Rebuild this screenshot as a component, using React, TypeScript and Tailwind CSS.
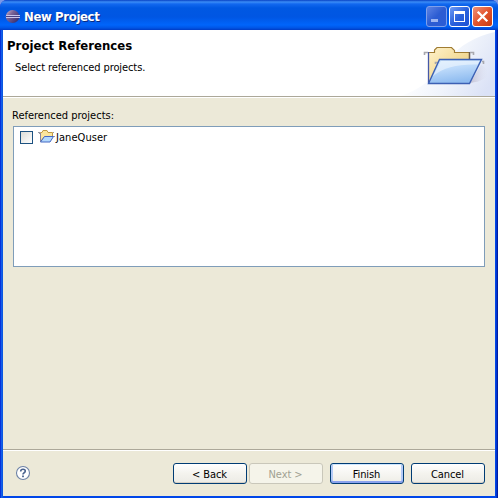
import type { ReactNode } from "react";

function EclipseLogo() {
  return (
    <svg width="16" height="16" viewBox="0 0 16 16" className="shrink-0">
      <defs>
        <linearGradient id="logo" x1="0" y1="0" x2="1" y2="0.8">
          <stop offset="0" stopColor="#d9bcc9" />
          <stop offset="0.4" stopColor="#7a6397" />
          <stop offset="1" stopColor="#322a6c" />
        </linearGradient>
      </defs>
      <ellipse cx="7.6" cy="7.5" rx="6.800" ry="6.500" fill="url(#logo)" />
      <path d="M1 6.500h14M1 8.500h14" stroke="#c9c6ec" strokeWidth="1" />
      <path d="M1 7.500h13" stroke="#4b4083" />
    </svg>
  );
}

function CaptionButton({ kind }: { kind: "min" | "max" | "close" }) {
  const tone =
    kind === "close"
      ? "border-white bg-linear-to-br from-[#ee9177] via-[#e2532c] to-[#c63b10]"
      : kind === "max"
        ? "border-white bg-linear-to-br from-[#6f9bf5] via-[#2b62dc] to-[#1c50d4]"
        : "border-[#7f9fea] bg-linear-to-br from-[#5d83e4] via-[#2c5cd2] to-[#2b5cd6]";
  return (
    <div className={`h-[21px] w-[21px] rounded-[3px] border ${tone}`}>
      <svg width="19" height="19" viewBox="0 0 19 19" className="block">
        {kind === "min" && <rect x="4" y="12" width="7" height="3" fill="#9db5f0" />}
        {kind === "max" && (
          <path d="M4 4h11v11H4zM5 7v7h9V7z" fill="#fff" fillRule="evenodd" />
        )}
        {kind === "close" && (
          <path d="M4.7 4.7l9.6 9.6M14.3 4.7l-9.6 9.6" stroke="#fff" strokeWidth="2.3" />
        )}
      </svg>
    </div>
  );
}

function BannerFolder() {
  return (
    <svg width="95" height="66" viewBox="0 0 95 66" className="shrink-0">
      <defs>
        <linearGradient id="sweep" x1="0" y1="0.3" x2="1" y2="0.7">
          <stop offset="0.2" stopColor="#ffffff" />
          <stop offset="0.6" stopColor="#eff3fb" />
          <stop offset="1" stopColor="#dbe2f6" />
        </linearGradient>
        <linearGradient id="paper" x1="0" y1="0" x2="1" y2="1">
          <stop offset="0" stopColor="#fff3cc" />
          <stop offset="1" stopColor="#e9c66c" />
        </linearGradient>
        <linearGradient id="front" x1="0" y1="0" x2="0.3" y2="1">
          <stop offset="0" stopColor="#d4eafd" />
          <stop offset="0.45" stopColor="#bddafa" />
          <stop offset="1" stopColor="#8fbcf0" />
        </linearGradient>
        <linearGradient id="shade" x1="0" y1="0" x2="1" y2="0">
          <stop offset="0" stopColor="#c3c0d2" />
          <stop offset="1" stopColor="#dfe3f3" stopOpacity="0" />
        </linearGradient>
      </defs>
      <path d="M95 2C76 6 60 15 48 30 34 48 20 60 0 66h95z" fill="url(#sweep)" />
      <path d="M70 53l11-18c8 4 10 9 4 13s-9 4-15 5z" fill="url(#shade)" />
      <path d="M28.500 52.500V22.500H33.500L37.500 17.500H51.500L54.500 22.500H69.500V50z" fill="url(#paper)" />
      <path d="M29 22.500H34.500V20L37 17.500H51.500L54.500 20.500V22.500H69" fill="none" stroke="#a07c32" strokeWidth="1.2" />
      <path d="M28.500 53V22" stroke="#4658a8" strokeWidth="1.3" />
      <path d="M69.500 22V30" stroke="#6a5a48" strokeWidth="1.500" />
      <path d="M24.500 25V22.500H28M70 22.500H73.500V25M35.500 34V32.500H38.500M82 31.500H83.500V34" fill="none" stroke="#a8a8ae" strokeWidth="1.6" />
      <path d="M28.500 53.500L39.500 29.500H81.500L69.500 53.500z" fill="url(#front)" stroke="#3c60b4" strokeWidth="1.400" />
      <path d="M41 31H79.500l-2 3.500C58 34 44 37 33 46z" fill="#fff" opacity="0.45" />
    </svg>
  );
}

function SmallFolder() {
  return (
    <svg width="17" height="16" viewBox="0 0 17 16" className="shrink-0">
      <path d="M2.500 13V3.500H4L5 1.500H9L10 3.500H14.500V8H6z" fill="#fbe59c" stroke="#c09a45" />
      <path d="M2.500 4V12" stroke="#8a86a0" />
      <path d="M0 3.500h2M1.500 4v1M15 3.500h1M15.500 7.500h1.500" stroke="#9a9ca8" />
      <path d="M2.500 13L6.500 7.500H15.500L12 13z" fill="#b3d9fc" stroke="#4568c4" />
    </svg>
  );
}

function HelpIcon() {
  return (
    <svg width="16" height="16" viewBox="0 0 16 16">
      <circle cx="8" cy="8" r="6.5" fill="#fff" stroke="#6d82a6" strokeWidth="1.1" />
      <path d="M5.700 6.400Q5.700 4.200 8 4.200T10.300 6.100Q10.300 7.200 8.900 8Q8 8.500 8 9.500" fill="none" stroke="#49628d" strokeWidth="1.6" />
      <rect x="7.100" y="10.500" width="1.800" height="1.700" fill="#49628d" />
    </svg>
  );
}

function DialogButton({ children, state }: { children: ReactNode; state?: "default" | "disabled" }) {
  const look =
    state === "disabled"
      ? "border-[#c9c7ba] bg-[#f5f4ea] text-[#a1a192]"
      : state === "default"
        ? "border-[#003c74] bg-linear-to-b from-white to-[#eeede6] shadow-[inset_0_1px_#cee7ff,inset_0_-2px_#8ba3ee,inset_2px_0_#b5cbf7,inset_-2px_0_#b5cbf7]"
        : "border-[#003c74] bg-linear-to-b from-white via-[#f4f3ee] to-[#ecebe5] shadow-[inset_0_-1px_#d6d0c5]";
  return (
    <button className={`flex h-[21px] w-[74px] items-center justify-center rounded-[3px] border pt-px pr-px text-[11px] leading-none tracking-[-0.1px] ${look}`}>
      {children}
    </button>
  );
}

export default function App() {
  return (
    <div className="bg-[#7a98e8]">
      <div className="flex h-[498px] w-[498px] flex-col overflow-hidden rounded-t-[7px] bg-[#0831d9] font-['DejaVu_Sans_Condensed','DejaVu_Sans',sans-serif] text-black [font-stretch:condensed]">
        <header className="flex h-[30px] shrink-0 items-center bg-[linear-gradient(to_bottom,#0842c4_0,#3b8df6_2px,#1268ef_4px,#0058e2_8px,#0056e3_17px,#0065fb_25px,#0054e4_28px,#003bc4_30px)] pt-[3px] pr-[5px] pl-[5px]">
          <EclipseLogo />
          <h1 className="ml-[3px] flex-1 text-[13px] leading-none font-bold tracking-[-0.37px] text-white [text-shadow:1px_1px_#0a2a80]">New Project</h1>
          <div className="flex gap-[2px]">
            <CaptionButton kind="min" />
            <CaptionButton kind="max" />
            <CaptionButton kind="close" />
          </div>
        </header>
        <div className="flex min-h-0 flex-1 bg-[linear-gradient(to_right,#0831d9_0,#0831d9_1px,#1660ee_1px,#0855dd_3px,#0046e8_4px,#0046e8_496px,#0026b8_497px,#00138c_498px)] px-[3px] pb-[2px]">
          <main className="flex min-w-0 flex-1 flex-col bg-[#ece9d8]">
            <section className="flex h-[67px] shrink-0 justify-between border-b border-[#aca899] bg-white">
              <div className="pt-[9px] pl-1">
                <h2 className="text-[13px] leading-[14px] font-bold tracking-[0.03px]">Project References</h2>
                <p className="mt-[8px] ml-2 text-[11px] leading-[14px] tracking-[-0.1px]">Select referenced projects.</p>
              </div>
              <BannerFolder />
            </section>
            <section className="flex-1 border-t border-white px-[10px] pt-[11px]">
              <p className="-ml-px text-[11px] leading-[14px]">Referenced projects:</p>
              <div className="mt-[3px] h-[141px] border border-[#7f9db9] bg-white pt-[3px] pl-[6px]">
                <div className="flex h-[14px] items-center">
                  <div className="h-[13px] w-[13px] border border-[#1c5180] bg-linear-to-br from-[#dcdcd7] to-white" />
                  <div className="ml-[5px]"><SmallFolder /></div>
                  <span className="ml-px text-[11px] leading-none tracking-[0.05px]">JaneQuser</span>
                </div>
              </div>
            </section>
            <footer className="flex h-[47px] shrink-0 border-t border-[#aca899]">
              <div className="flex flex-1 items-start border-t border-white pt-[12px] pr-[10px] pl-[12px]">
                <div className="mt-[2px] flex-1"><HelpIcon /></div>
                <div className="flex">
                  <DialogButton>&lt; Back</DialogButton>
                  <div className="ml-[2px]"><DialogButton state="disabled">Next &gt;</DialogButton></div>
                  <div className="ml-[7px]"><DialogButton state="default">Finish</DialogButton></div>
                  <div className="ml-[7px]"><DialogButton>Cancel</DialogButton></div>
                </div>
              </div>
            </footer>
          </main>
        </div>
      </div>
    </div>
  );
}
